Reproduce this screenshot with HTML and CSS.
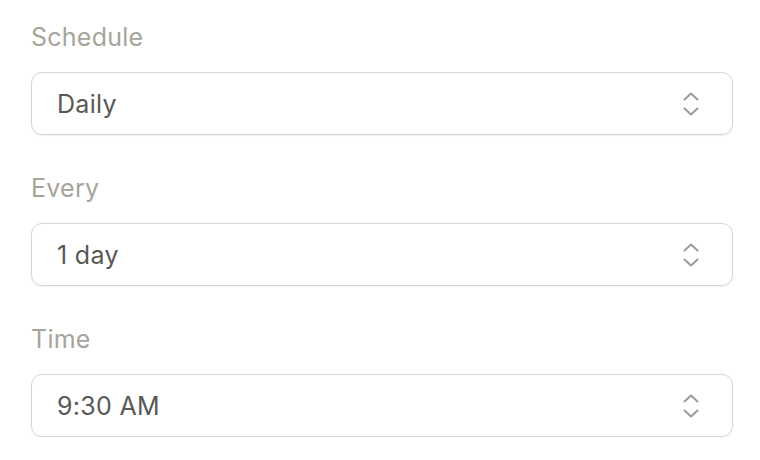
FILE: index.html
```html
<!DOCTYPE html>
<html lang="en">
<head>
<meta charset="utf-8">
<title>Schedule</title>
<link rel="stylesheet" href="styles.css">
</head>
<body>
<main class="form">
  <div class="field">
    <div class="label">Schedule</div>
    <div class="select">
      <span class="value">Daily</span>
      <svg class="chev" viewBox="0 0 16 24" width="16" height="24" aria-hidden="true"><path d="M1.5 7.5 L8 1.5 L14.5 7.5 M1.5 16.5 L8 22.5 L14.5 16.5" fill="none" stroke="currentColor" stroke-width="2" stroke-linecap="round" stroke-linejoin="round"/></svg>
    </div>
  </div>
  <div class="field">
    <div class="label">Every</div>
    <div class="select">
      <span class="value">1 day</span>
      <svg class="chev" viewBox="0 0 16 24" width="16" height="24" aria-hidden="true"><path d="M1.5 7.5 L8 1.5 L14.5 7.5 M1.5 16.5 L8 22.5 L14.5 16.5" fill="none" stroke="currentColor" stroke-width="2" stroke-linecap="round" stroke-linejoin="round"/></svg>
    </div>
  </div>
  <div class="field">
    <div class="label">Time</div>
    <div class="select">
      <span class="value">9:30 AM</span>
      <svg class="chev" viewBox="0 0 16 24" width="16" height="24" aria-hidden="true"><path d="M1.5 7.5 L8 1.5 L14.5 7.5 M1.5 16.5 L8 22.5 L14.5 16.5" fill="none" stroke="currentColor" stroke-width="2" stroke-linecap="round" stroke-linejoin="round"/></svg>
    </div>
  </div>
</main>
</body>
</html>
```
FILE: styles.css
```css
html, body {
  margin: 0;
  padding: 0;
  background: #ffffff;
}
body {
  font-family: Inter, "Liberation Sans", sans-serif;
  -webkit-font-smoothing: antialiased;
}
.form {
  display: flex;
  flex-direction: column;
  gap: 38px;
  padding: 22px 27px 0 31px;
}
.field {
  display: flex;
  flex-direction: column;
  gap: 20px;
}
.label {
  font-size: 25px;
  line-height: 30px;
  letter-spacing: 0.25px;
  color: #a6a49b;
}
.select {
  height: 63px;
  box-sizing: border-box;
  border: 1.5px solid #d8d6d0;
  border-radius: 11px;
  box-shadow: 0 1px 2px rgba(0, 0, 0, 0.07);
  display: flex;
  align-items: center;
  justify-content: space-between;
  padding: 0 33px 0 25px;
}
.value {
  font-size: 25px;
  letter-spacing: 0.3px;
  color: #595854;
}
.chev {
  color: #9d9b93;
  display: block;
}
```
